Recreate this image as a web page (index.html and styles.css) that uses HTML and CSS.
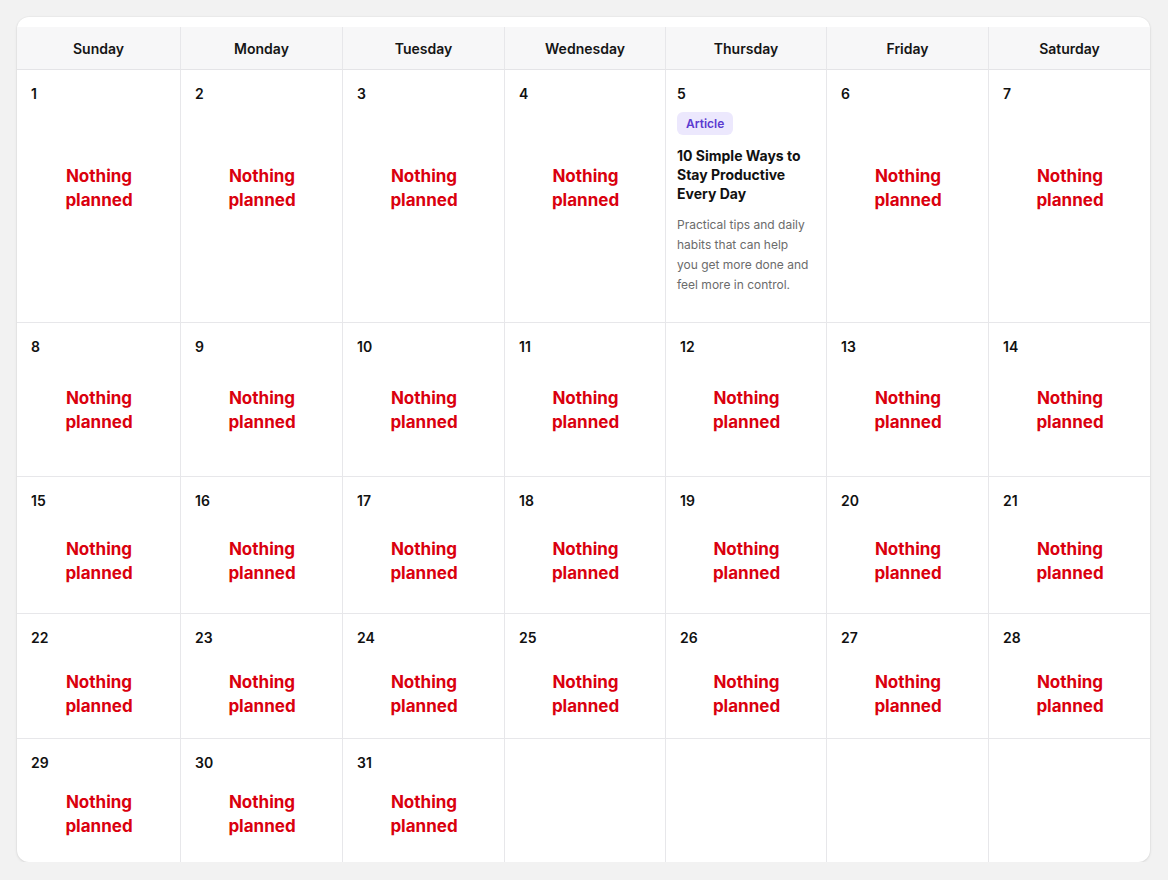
FILE: index.html
```html
<!DOCTYPE html>
<html lang="en">
<head>
<meta charset="utf-8">
<title>Calendar</title>
<link rel="stylesheet" href="styles.css">
</head>
<body>
<div class="card">
  <div class="grid">
    <div class="head">Sunday</div>
    <div class="head">Monday</div>
    <div class="head">Tuesday</div>
    <div class="head">Wednesday</div>
    <div class="head">Thursday</div>
    <div class="head">Friday</div>
    <div class="head last-col">Saturday</div>

    <div class="cell r1"><div class="date">1</div><div class="empty">Nothing<br>planned</div></div>
    <div class="cell r1"><div class="date">2</div><div class="empty">Nothing<br>planned</div></div>
    <div class="cell r1"><div class="date">3</div><div class="empty">Nothing<br>planned</div></div>
    <div class="cell r1"><div class="date">4</div><div class="empty">Nothing<br>planned</div></div>
    <div class="cell r1 article">
      <div class="date">5</div>
      <span class="badge">Article</span>
      <div class="title">10 Simple Ways to Stay Productive Every Day</div>
      <div class="desc">Practical tips and daily habits that can help you get more done and feel more in control.</div>
    </div>
    <div class="cell r1"><div class="date">6</div><div class="empty">Nothing<br>planned</div></div>
    <div class="cell r1 last-col"><div class="date">7</div><div class="empty">Nothing<br>planned</div></div>

    <div class="cell r2"><div class="date">8</div><div class="empty">Nothing<br>planned</div></div>
    <div class="cell r2"><div class="date">9</div><div class="empty">Nothing<br>planned</div></div>
    <div class="cell r2"><div class="date">10</div><div class="empty">Nothing<br>planned</div></div>
    <div class="cell r2"><div class="date">11</div><div class="empty">Nothing<br>planned</div></div>
    <div class="cell r2"><div class="date">12</div><div class="empty">Nothing<br>planned</div></div>
    <div class="cell r2"><div class="date">13</div><div class="empty">Nothing<br>planned</div></div>
    <div class="cell r2 last-col"><div class="date">14</div><div class="empty">Nothing<br>planned</div></div>

    <div class="cell r3"><div class="date">15</div><div class="empty">Nothing<br>planned</div></div>
    <div class="cell r3"><div class="date">16</div><div class="empty">Nothing<br>planned</div></div>
    <div class="cell r3"><div class="date">17</div><div class="empty">Nothing<br>planned</div></div>
    <div class="cell r3"><div class="date">18</div><div class="empty">Nothing<br>planned</div></div>
    <div class="cell r3"><div class="date">19</div><div class="empty">Nothing<br>planned</div></div>
    <div class="cell r3"><div class="date">20</div><div class="empty">Nothing<br>planned</div></div>
    <div class="cell r3 last-col"><div class="date">21</div><div class="empty">Nothing<br>planned</div></div>

    <div class="cell r4"><div class="date">22</div><div class="empty">Nothing<br>planned</div></div>
    <div class="cell r4"><div class="date">23</div><div class="empty">Nothing<br>planned</div></div>
    <div class="cell r4"><div class="date">24</div><div class="empty">Nothing<br>planned</div></div>
    <div class="cell r4"><div class="date">25</div><div class="empty">Nothing<br>planned</div></div>
    <div class="cell r4"><div class="date">26</div><div class="empty">Nothing<br>planned</div></div>
    <div class="cell r4"><div class="date">27</div><div class="empty">Nothing<br>planned</div></div>
    <div class="cell r4 last-col"><div class="date">28</div><div class="empty">Nothing<br>planned</div></div>

    <div class="cell r5 last-row"><div class="date">29</div><div class="empty">Nothing<br>planned</div></div>
    <div class="cell r5 last-row"><div class="date">30</div><div class="empty">Nothing<br>planned</div></div>
    <div class="cell r5 last-row"><div class="date">31</div><div class="empty">Nothing<br>planned</div></div>
    <div class="cell r5 last-row"></div>
    <div class="cell r5 last-row"></div>
    <div class="cell r5 last-row"></div>
    <div class="cell r5 last-row last-col"></div>
  </div>
</div>
</body>
</html>
```

FILE: styles.css
```css
* { box-sizing: border-box; }

html, body {
  margin: 0;
  padding: 0;
}

body {
  background: #f2f2f2;
  font-family: Inter, "Liberation Sans", sans-serif;
  color: #111;
  padding: 17px 18px 0 17px;
}

.card {
  width: 1133px;
  background: #fff;
  border-radius: 12px;
  padding-top: 10px;
  box-shadow: 0 1px 3px rgba(0,0,0,0.10), 0 0 0 1px rgba(0,0,0,0.02);
  overflow: hidden;
}

.grid {
  display: grid;
  grid-template-columns: 164px 162px 162px 161px 161px 162px 1fr;
  grid-template-rows: 43px 253px 154px 137px 125px 123px;
}

.head {
  background: #f7f7f8;
  border-right: 1px solid #e7e7ea;
  border-bottom: 1px solid #e4e4e7;
  display: flex;
  align-items: center;
  justify-content: center;
  font-size: 14px;
  font-weight: 600;
  color: #151515;
}

.cell {
  border-right: 1px solid #e7e7ea;
  border-bottom: 1px solid #e7e7ea;
  padding: 14px 13px 0 14px;
  display: flex;
  flex-direction: column;
}

.cell.article {
  padding: 14px 14px 0 11px;
}

.last-col { border-right: none; }
.last-row { border-bottom: none; }

.date {
  font-size: 14px;
  font-weight: 600;
  line-height: 20px;
  color: #111;
}

.empty {
  text-align: center;
  color: #da000e;
  font-size: 17px;
  font-weight: 700;
  line-height: 24px;
}

.r1 .empty { margin-top: 60px; }
.r2 .empty { margin-top: 29px; }
.r3 .empty { margin-top: 26px; }
.r4 .empty { margin-top: 22px; }
.r5 .empty { margin-top: 17px; }

.badge {
  align-self: flex-start;
  margin-top: 8px;
  height: 23px;
  line-height: 23px;
  padding: 0 9px;
  border-radius: 6px;
  background: #ece8fd;
  color: #5b3bd0;
  font-size: 12px;
  font-weight: 600;
}

.title {
  margin-top: 11px;
  font-size: 14px;
  font-weight: 700;
  line-height: 19px;
  color: #111;
}

.desc {
  margin-top: 12px;
  font-size: 12px;
  line-height: 20px;
  color: #6b6b6b;
}
```
